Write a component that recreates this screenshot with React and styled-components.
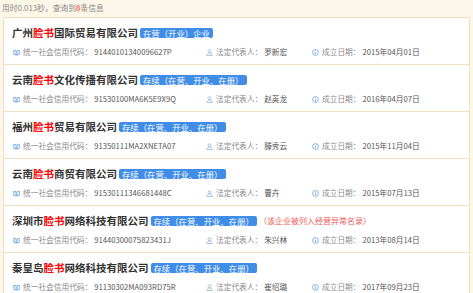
import React from "react";
import styled, { createGlobalStyle } from "styled-components";

const GlobalStyle = createGlobalStyle`
  body {
    margin: 0;
    background: #fdf7e9;
    font-family: "Noto Sans CJK SC", "Noto Sans", sans-serif;
    overflow: hidden;
  }
`;

const Summary = styled.div`
  height: 17px;
  padding-left: 2px;
  font-size: 7.8px;
  line-height: 15px;
  color: #8a8a8a;
`;

const Count = styled.span`
  color: #f33;
`;

const List = styled.div`
  margin-left: 3px;
  width: 465px;
  background: #fff;
  border: 1px solid #f1dfbb;
  border-bottom: none;
  border-radius: 3px 3px 0 0;
`;

const Row = styled.div`
  height: 38px;
  padding: 8px 0 0 8px;
  border-bottom: 1px solid #f1dfbb;
`;

const TitleLine = styled.div`
  display: flex;
  align-items: center;
  height: 13px;
  white-space: nowrap;
`;

const Title = styled.span`
  font-size: 10.5px;
  line-height: 13px;
  font-weight: bold;
  color: #333;
`;

const Hit = styled.span`
  color: #f00;
`;

const Badge = styled.span`
  margin-left: 2px;
  padding: 0 3px;
  height: 10px;
  line-height: 10px;
  font-size: 8.4px;
  color: #fff;
  background: #3f8de6;
  border-radius: 2px;
`;

const Note = styled.span`
  margin-left: 2px;
  font-size: 8px;
  line-height: 10px;
  color: #f05a5a;
`;

const InfoLine = styled.div`
  display: grid;
  grid-template-columns: 193px 106px auto;
  margin: 8px 0 0 1px;
  height: 10px;
  font-size: 7.7px;
  line-height: 10px;
  white-space: nowrap;
`;

const Field = styled.div`
  display: flex;
  align-items: center;
`;

const Label = styled.span`
  color: #8a8a8a;
  margin-left: 3px;
`;

const Value = styled.span`
  color: #555;
  margin-left: 2px;
`;

const BookIcon = () => (
  <svg width="7" height="7" viewBox="0 0 14 14" fill="none" stroke="#5b9bdc" strokeWidth="1.5">
    <path d="M1.5 2.5 L6 3.5 V12 L1.5 11 Z" />
    <path d="M12.5 2.5 L8 3.5 V12 L12.5 11 Z" />
    <path d="M6 12 H8" />
  </svg>
);

const PersonIcon = () => (
  <svg width="7" height="7" viewBox="0 0 14 14" fill="none" stroke="#8fb0d6" strokeWidth="1.5">
    <circle cx="7" cy="4.5" r="3" />
    <path d="M1.5 13 C2 9.5 4 8 7 8 C10 8 12 9.5 12.5 13 Z" />
  </svg>
);

const InfoIcon = () => (
  <svg width="7" height="7" viewBox="0 0 14 14" fill="none" stroke="#5b9bdc" strokeWidth="1.5">
    <circle cx="7" cy="7" r="5.8" />
    <path d="M7 6 V10.5" />
    <path d="M7 3.5 V4.6" />
  </svg>
);

const companies = [
  { pre: "广州", post: "国际贸易有限公司", status: "在营（开业）企业", code: "91440101340096627P", rep: "罗新宏", date: "2015年04月01日" },
  { pre: "云南", post: "文化传播有限公司", status: "存续（在营、开业、在册）", code: "91530100MA6K5E9X9Q", rep: "赵英龙", date: "2016年04月07日" },
  { pre: "福州", post: "贸易有限公司", status: "存续（在营、开业、在册）", code: "91350111MA2XNETA07", rep: "滕秀云", date: "2015年11月04日" },
  { pre: "云南", post: "商贸有限公司", status: "存续（在营、开业、在册）", code: "91530111346681448C", rep: "曹卉", date: "2015年07月13日" },
  { pre: "深圳市", post: "网络科技有限公司", status: "存续（在营、开业、在册）", code: "91440300075823431J", rep: "朱兴林", date: "2013年08月14日", note: "（该企业被列入经营异常名录）" },
  { pre: "秦皇岛", post: "网络科技有限公司", status: "存续（在营、开业、在册）", code: "91130302MA093RD75R", rep: "崔绍璐", date: "2017年09月23日" },
];

export default function App() {
  return (
    <>
      <GlobalStyle />
      <Summary>
        用时0.013秒，查询到<Count>8</Count>条信息
      </Summary>
      <List>
        {companies.map((c, i) => (
          <Row key={i}>
            <TitleLine>
              <Title>
                {c.pre}
                <Hit>脸书</Hit>
                {c.post}
              </Title>
              <Badge>{c.status}</Badge>
              {c.note && <Note>{c.note}</Note>}
            </TitleLine>
            <InfoLine>
              <Field>
                <BookIcon />
                <Label>统一社会信用代码：</Label>
                <Value>{c.code}</Value>
              </Field>
              <Field>
                <PersonIcon />
                <Label>法定代表人：</Label>
                <Value>{c.rep}</Value>
              </Field>
              <Field>
                <InfoIcon />
                <Label>成立日期：</Label>
                <Value>{c.date}</Value>
              </Field>
            </InfoLine>
          </Row>
        ))}
      </List>
    </>
  );
}
